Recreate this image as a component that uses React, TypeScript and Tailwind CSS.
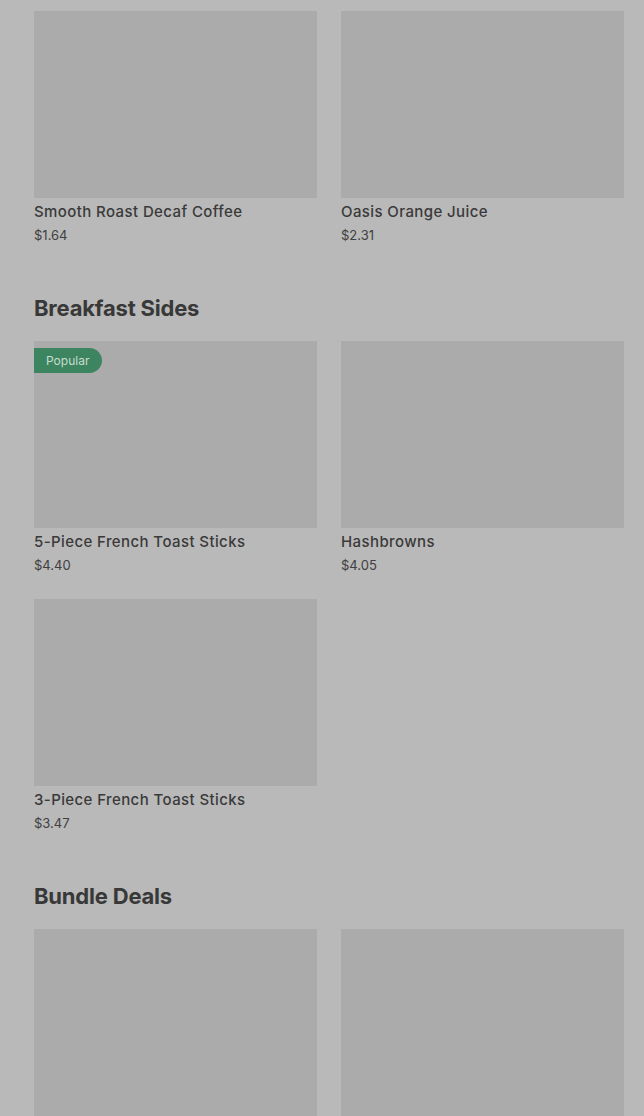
import React from 'react';

type Item = {
  name: string;
  price: string;
  badge?: string;
};

type Section = {
  title?: string;
  items: Item[];
};

const sections: Section[] = [
  {
    items: [
      { name: 'Smooth Roast Decaf Coffee', price: '$1.64' },
      { name: 'Oasis Orange Juice', price: '$2.31' },
    ],
  },
  {
    title: 'Breakfast Sides',
    items: [
      { name: '5-Piece French Toast Sticks', price: '$4.40', badge: 'Popular' },
      { name: 'Hashbrowns', price: '$4.05' },
      { name: '3-Piece French Toast Sticks', price: '$3.47' },
    ],
  },
  {
    title: 'Bundle Deals',
    items: [
      { name: '', price: '' },
      { name: '', price: '' },
    ],
  },
];

const ItemCard: React.FC<{ item: Item }> = ({ item }) => (
  <div className="flex flex-col">
    <div className="relative h-[187px] bg-[#ababab]">
      {item.badge && (
        <div className="absolute left-0 top-[7px] h-[25px] pl-3 pr-[13px] rounded-r-full bg-[#3c8560] text-[#c9dccf] text-[12px] leading-[25px]">
          {item.badge}
        </div>
      )}
    </div>
    {item.name && (
      <>
        <div className="mt-1 text-[15px] leading-5 font-medium tracking-[0.4px] text-[#3a3a3a]">
          {item.name}
        </div>
        <div className="mt-[3px] text-[13px] leading-5 text-[#404040]">
          {item.price}
        </div>
      </>
    )}
  </div>
);

export default function App() {
  return (
    <div
      className="min-h-screen bg-[#b9b9b9] pt-[11px] pl-[34px] pr-[20px] overflow-hidden"
      style={{ fontFamily: 'Inter, "Noto Sans", sans-serif' }}
    >
      {sections.map((s, i) => (
        <div key={i} className={i > 0 ? 'mt-[49px]' : ''}>
          {s.title && (
            <h2 className="mb-[19px] text-[22px] leading-7 font-bold tracking-[-0.2px] text-[#383838]">
              {s.title}
            </h2>
          )}
          <div className="grid grid-cols-2 gap-x-6 gap-y-6">
            {s.items.map((it, j) => (
              <ItemCard key={j} item={it} />
            ))}
          </div>
        </div>
      ))}
    </div>
  );
}
